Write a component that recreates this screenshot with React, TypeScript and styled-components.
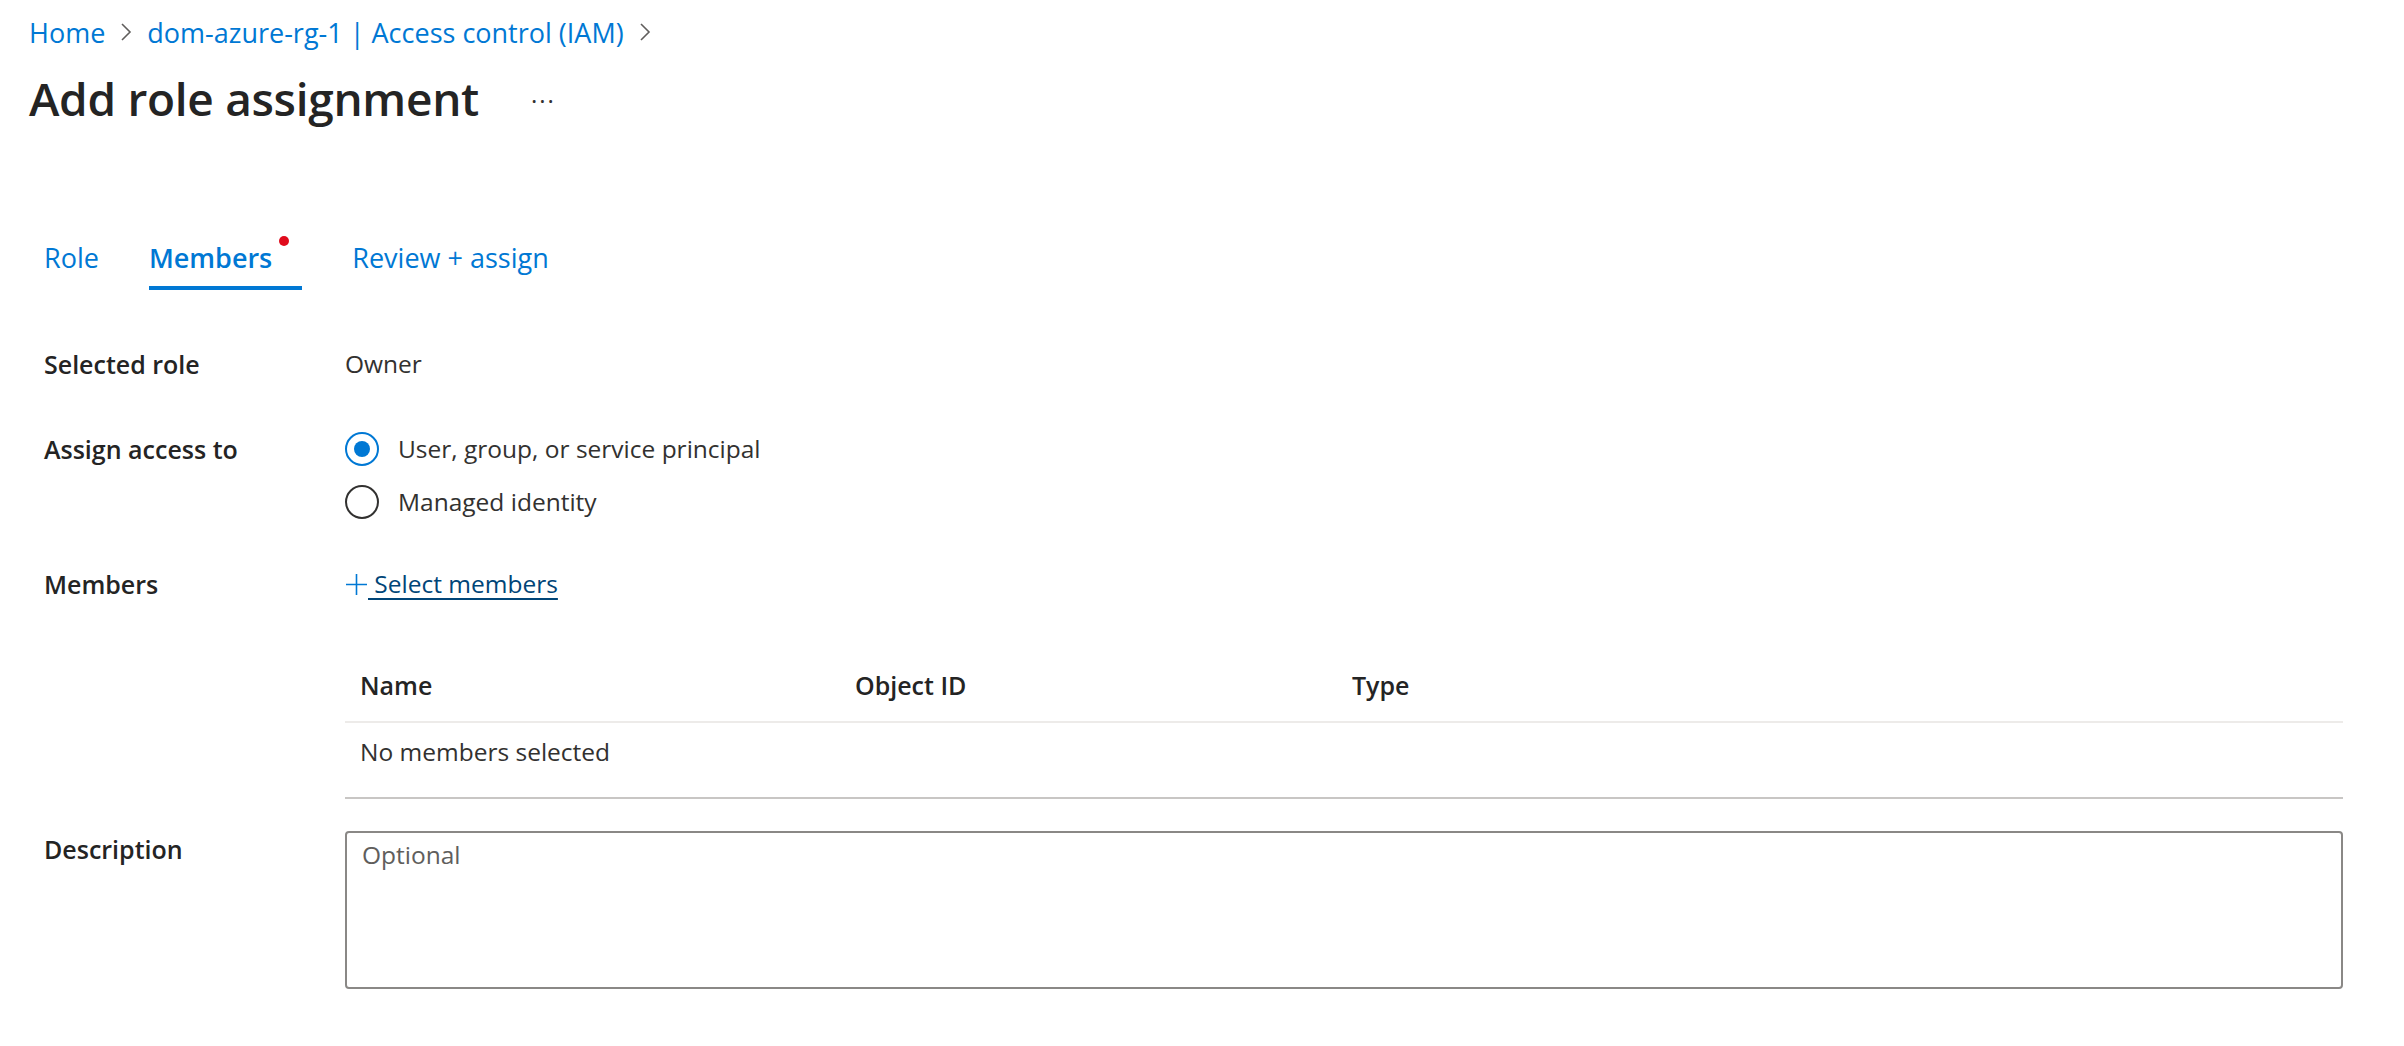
import React from "react";
import styled, { createGlobalStyle } from "styled-components";

const GlobalStyle = createGlobalStyle`
  html, body {
    margin: 0;
    padding: 0;
    background: #ffffff;
  }
  body {
    font-family: "Open Sans", "Noto Sans", Arial, sans-serif;
    color: #323130;
  }
`;

const Page = styled.div`
  width: 2404px;
  min-height: 1046px;
  box-sizing: border-box;
  padding: 12px 61px 0 29px;
`;

const Breadcrumb = styled.nav`
  display: flex;
  align-items: center;
  gap: 15px;
  height: 40px;
  font-size: 27px;
  color: #0078d4;
`;

const Crumb = styled.a`
  color: #0078d4;
  text-decoration: none;
`;

const Chevron = () => (
  <svg width="12" height="22" viewBox="0 0 12 22" fill="none">
    <path d="M2 3l8 8-8 8" stroke="#605e5c" strokeWidth="1.6" />
  </svg>
);

const TitleRow = styled.div`
  display: flex;
  align-items: center;
  gap: 52px;
  margin-top: 16px;
  height: 60px;
`;

const Title = styled.h1`
  margin: 0;
  font-size: 46px;
  font-weight: 600;
  color: #242424;
  letter-spacing: -0.3px;
`;

const More = styled.span`
  font-size: 24px;
  color: #323130;
  letter-spacing: 2px;
  padding-top: 4px;
`;

const Content = styled.div`
  padding-left: 15px;
`;

const TabList = styled.div`
  display: flex;
  gap: 50px;
  margin-top: 110px;
`;

const Tab = styled.div<{ $active?: boolean; $badge?: boolean }>`
  position: relative;
  font-size: 27px;
  line-height: 40px;
  color: #0078d4;
  font-weight: ${({ $active }) => ($active ? 600 : 400)};
  padding-bottom: 12px;
  padding-right: ${({ $badge }) => ($badge ? "30px" : "0")};
  &::after {
    content: "";
    position: absolute;
    left: 0;
    right: 0;
    bottom: 0;
    height: 4px;
    background: ${({ $active }) => ($active ? "#0078d4" : "transparent")};
  }
`;

const Dot = styled.span`
  position: absolute;
  right: 13px;
  top: -2px;
  width: 10px;
  height: 10px;
  border-radius: 50%;
  background: #e00b1c;
`;

const Row = styled.div<{ $mt: number }>`
  display: grid;
  grid-template-columns: 301px 1fr;
  margin-top: ${({ $mt }) => $mt}px;
  font-size: 24.5px;
  line-height: 36px;
`;

const Label = styled.div`
  font-size: 25px;
  font-weight: 600;
  color: #242424;
`;

const Value = styled.div`
  color: #323130;
`;

const RadioGroup = styled.div`
  display: flex;
  flex-direction: column;
  gap: 17px;
`;

const RadioOption = styled.label`
  display: flex;
  align-items: center;
  gap: 19px;
  height: 36px;
`;

const RadioCircle = styled.span<{ $checked?: boolean }>`
  box-sizing: border-box;
  width: 34px;
  height: 34px;
  border-radius: 50%;
  border: 2.5px solid ${({ $checked }) => ($checked ? "#0078d4" : "#323130")};
  display: flex;
  align-items: center;
  justify-content: center;
  &::after {
    content: "";
    width: 16px;
    height: 16px;
    border-radius: 50%;
    background: ${({ $checked }) => ($checked ? "#0078d4" : "transparent")};
  }
`;

const SelectLink = styled.a`
  display: inline-flex;
  align-items: center;
  color: #004578;
  cursor: pointer;
`;

const LinkText = styled.span`
  text-decoration: underline;
  text-underline-offset: 5px;
`;

const PlusIcon = () => (
  <svg width="23" height="23" viewBox="0 0 23 23" fill="none">
    <path d="M11.5 1v21M1 11.5h21" stroke="#0078d4" strokeWidth="1.6" />
  </svg>
);

const TableWrap = styled.div`
  grid-column: 2;
`;

const Table = styled.div`
  display: flex;
  flex-direction: column;
  border-bottom: 2px solid #c8c6c4;
`;

const HeaderRow = styled.div`
  display: grid;
  grid-template-columns: 495px 497px 1fr;
  height: 74px;
  box-sizing: border-box;
  padding-top: 18px;
  border-bottom: 2px solid #edebe9;
  font-size: 25px;
  font-weight: 600;
  color: #242424;
`;

const BodyRow = styled.div`
  display: grid;
  grid-template-columns: 495px 497px 1fr;
  height: 74px;
  padding-top: 11px;
  box-sizing: border-box;
`;

const Cell = styled.div`
  padding-left: 15px;
`;

const TextArea = styled.textarea`
  box-sizing: border-box;
  width: 100%;
  height: 158px;
  border: 2px solid #8a8886;
  border-radius: 4px;
  padding: 4px 15px;
  font-family: "Open Sans", "Noto Sans", Arial, sans-serif;
  font-size: 24.5px;
  line-height: 36px;
  color: #323130;
  resize: none;
  outline: none;
  &::placeholder {
    color: #605e5c;
  }
`;

export default function App() {
  return (
    <>
      <GlobalStyle />
      <Page>
        <Breadcrumb>
          <Crumb>Home</Crumb>
          <Chevron />
          <Crumb>dom-azure-rg-1 | Access control (IAM)</Crumb>
          <Chevron />
        </Breadcrumb>
        <TitleRow>
          <Title>Add role assignment</Title>
          <More>···</More>
        </TitleRow>
        <Content>
          <TabList>
            <Tab>Role</Tab>
            <Tab $active $badge>
              Members
              <Dot />
            </Tab>
            <Tab>Review + assign</Tab>
          </TabList>

          <Row $mt={56}>
            <Label>Selected role</Label>
            <Value>Owner</Value>
          </Row>

          <Row $mt={49}>
            <Label>Assign access to</Label>
            <RadioGroup>
              <RadioOption>
                <RadioCircle $checked />
                User, group, or service principal
              </RadioOption>
              <RadioOption>
                <RadioCircle />
                Managed identity
              </RadioOption>
            </RadioGroup>
          </Row>

          <Row $mt={46}>
            <Label>Members</Label>
            <Value>
              <SelectLink>
                <PlusIcon />
                <LinkText>&nbsp;Select members</LinkText>
              </SelectLink>
            </Value>
          </Row>

          <Row $mt={44}>
            <TableWrap>
              <Table>
                <HeaderRow>
                  <Cell>Name</Cell>
                  <Cell>Object ID</Cell>
                  <Cell>Type</Cell>
                </HeaderRow>
                <BodyRow>
                  <Cell>No members selected</Cell>
                </BodyRow>
              </Table>
            </TableWrap>
          </Row>

          <Row $mt={32}>
            <Label>Description</Label>
            <TextArea placeholder="Optional" />
          </Row>
        </Content>
      </Page>
    </>
  );
}
